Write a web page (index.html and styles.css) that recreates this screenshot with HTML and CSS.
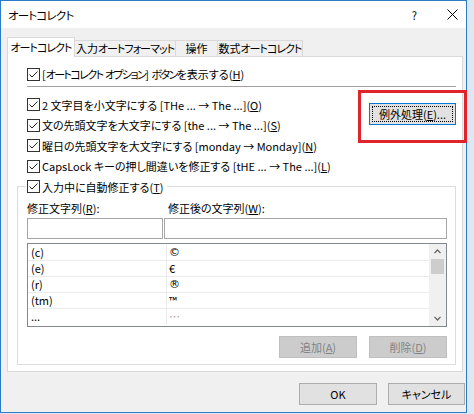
FILE: index.html
```html
<!DOCTYPE html>
<html lang="ja">
<head>
<meta charset="utf-8">
<title>オートコレクト</title>
<link rel="stylesheet" href="styles.css">
</head>
<body>
<div class="window">
  <div class="titlebar">
    <span class="title">オートコレクト</span>
    <span class="help">?</span>
    <svg class="close" width="11" height="11" viewBox="0 0 11 11"><path d="M0.5 0.5 L10.5 10.5 M10.5 0.5 L0.5 10.5" stroke="#000" stroke-width="1"/></svg>
  </div>
  <div class="tabs">
    <div class="tab active t1"><span class="k">オートコレクト</span></div>
    <div class="tab t2">入力<span class="k">オートフォーマット</span></div>
    <div class="tab t3">操作</div>
    <div class="tab t4">数式<span class="k">オートコレクト</span></div>
  </div>
  <div class="panel">
    <div class="row">
      <svg class="cb" width="13" height="13" viewBox="0 0 13 13"><rect x="0.5" y="0.5" width="12" height="12" fill="#fff" stroke="#333"/><path d="M2.5 6.5 L5 9 L10.5 3.5" fill="none" stroke="#222"/></svg>
      <span>[<span class="k2">オートコレクト</span> <span class="k2">オプション</span>] <span class="k2">ボタン</span>を表示する(<u>H</u>)</span>
    </div>
    <div class="sep"></div>
    <div class="opts">
      <div class="optlist">
        <div class="row">
          <svg class="cb" width="13" height="13" viewBox="0 0 13 13"><rect x="0.5" y="0.5" width="12" height="12" fill="#fff" stroke="#333"/><path d="M2.5 6.5 L5 9 L10.5 3.5" fill="none" stroke="#222"/></svg>
          <span>2 文字目を小文字にする [THe ... → The ...](<u>O</u>)</span>
        </div>
        <div class="row">
          <svg class="cb" width="13" height="13" viewBox="0 0 13 13"><rect x="0.5" y="0.5" width="12" height="12" fill="#fff" stroke="#333"/><path d="M2.5 6.5 L5 9 L10.5 3.5" fill="none" stroke="#222"/></svg>
          <span>文の先頭文字を大文字にする [the ... → The ...](<u>S</u>)</span>
        </div>
        <div class="row">
          <svg class="cb" width="13" height="13" viewBox="0 0 13 13"><rect x="0.5" y="0.5" width="12" height="12" fill="#fff" stroke="#333"/><path d="M2.5 6.5 L5 9 L10.5 3.5" fill="none" stroke="#222"/></svg>
          <span>曜日の先頭文字を大文字にする [monday → Monday](<u>N</u>)</span>
        </div>
        <div class="row">
          <svg class="cb" width="13" height="13" viewBox="0 0 13 13"><rect x="0.5" y="0.5" width="12" height="12" fill="#fff" stroke="#333"/><path d="M2.5 6.5 L5 9 L10.5 3.5" fill="none" stroke="#222"/></svg>
          <span>CapsLock キーの押し間違いを修正する [tHE ... → The ...](<u>L</u>)</span>
        </div>
      </div>
      <button class="btn default exc">例外処理(<u>E</u>)...</button>
    </div>
    <fieldset class="group">
      <legend class="legend">
        <svg class="cb" width="13" height="13" viewBox="0 0 13 13"><rect x="0.5" y="0.5" width="12" height="12" fill="#fff" stroke="#333"/><path d="M2.5 6.5 L5 9 L10.5 3.5" fill="none" stroke="#222"/></svg>
        <span>入力中に自動修正する(<u>T</u>)</span>
      </legend>
      <div class="labels">
        <span class="lab1">修正文字列(<u>R</u>):</span>
        <span>修正後の文字列(<u>W</u>):</span>
      </div>
      <div class="inputs">
        <div class="input in1"></div>
        <div class="input in2"></div>
      </div>
      <div class="list">
        <div class="rows">
          <div class="lr"><span class="c1">(c)</span><span class="c2 sym">©</span></div>
          <div class="lr"><span class="c1">(e)</span><span class="c2">€</span></div>
          <div class="lr"><span class="c1">(r)</span><span class="c2 sym">®</span></div>
          <div class="lr"><span class="c1">(tm)</span><span class="c2">™</span></div>
          <div class="lr last"><span class="c1">...</span><span class="c2 dim">…</span></div>
        </div>
        <div class="scroll">
          <div class="arrow"><svg width="7" height="5" viewBox="0 0 7 5"><path d="M0.5 4.2 L3.5 1 L6.5 4.2" fill="none" stroke="#606060" stroke-width="1.2"/></svg></div>
          <div class="thumb"></div>
          <div class="track"></div>
          <div class="arrow"><svg width="7" height="5" viewBox="0 0 7 5"><path d="M0.5 0.8 L3.5 4 L6.5 0.8" fill="none" stroke="#606060" stroke-width="1.2"/></svg></div>
        </div>
      </div>
      <div class="gbtns">
        <button class="btn disabled">追加(<u>A</u>)</button>
        <button class="btn disabled">削除(<u>D</u>)</button>
      </div>
    </fieldset>
  </div>
  <div class="footer">
    <button class="btn ok">OK</button>
    <button class="btn cancel">キャンセル</button>
  </div>
  <div class="annot"></div>
</div>
</body>
</html>
```
FILE: styles.css
```css
* { box-sizing: border-box; }
body {
  margin: 0;
  background: #dce9f4;
  font-family: "Noto Sans CJK JP", "Noto Sans", sans-serif;
  font-size: 11px;
  font-feature-settings: "palt";
  color: #000;
}
u { text-underline-offset: 1px; }
.k { letter-spacing: -1px; }
.k2 { letter-spacing: -1.6px; }
.window {
  position: relative;
  width: 467px;
  height: 413px;
  border: 1px solid #2b7bc8;
  background: #f0f0f0;
}
.titlebar {
  height: 27px;
  background: #fff;
  display: flex;
  align-items: center;
}
.title { padding-left: 7px; font-size: 11.5px; letter-spacing: -0.8px; }
.help { margin-left: auto; margin-right: 30px; font-size: 11px; }
.close { margin-right: 8px; display: block; }

.tabs {
  display: flex;
  align-items: flex-end;
  height: 20px;
  margin: 9px 0 -1px 6px;
  position: relative;
  z-index: 1;
}
.tab {
  height: 17px;
  border: 1px solid #d9d9d9;
  background: #f0f0f0;
  margin-left: -1px;
  text-align: center;
  line-height: 15px;
  white-space: nowrap;
}
.tab.active {
  height: 20px;
  background: #fff;
  border-bottom: none;
  margin-left: 0;
  position: relative;
  z-index: 2;
  line-height: 19px;
}
.t1 { width: 68px; }
.t2 { width: 102px; }
.t3 { width: 43px; }
.t4 { width: 86px; }

.panel {
  margin-left: 6px;
  width: 456px;
  height: 316px;
  border: 1px solid #d9d9d9;
  background: #fff;
  padding-top: 7px;
}
.row {
  display: flex;
  align-items: center;
  gap: 2px;
  height: 20px;
  padding-left: 19px;
  white-space: nowrap;
}
.cb { display: block; flex: none; }
.sep {
  margin: 2px 0 0 19px;
  width: 429px;
  height: 1px;
  background: #a0a0a0;
}
.opts { display: flex; margin-top: 7.5px; }
.optlist { flex: 1; }
.optlist .row { height: 20.5px; }

.btn {
  font-family: inherit;
  font-size: 11px;
  font-feature-settings: "palt";
  height: 22px;
  padding: 0;
  border: 1px solid #adadad;
  background: #e1e1e1;
  color: #000;
  line-height: 18px;
}
.btn.default { border-color: #0078d7; position: relative; }
.btn.default::after {
  content: "";
  position: absolute;
  inset: 2px;
  border: 1px dotted #000;
}
.exc { width: 87px; margin: 8.5px 6px 0 0; }
.btn.disabled { background: #cccccc; border-color: #bfbfbf; color: #838383; }

.group {
  margin: 0 0 0 9px;
  width: 439px;
  min-width: 0;
  border: 1px solid #dcdcdc;
  padding: 0 8px 6px 9px;
}
.legend {
  display: flex;
  align-items: center;
  gap: 2px;
  height: 20px;
  padding: 0 4px 0 1px;
  margin-left: -1px;
  white-space: nowrap;
}
.labels { display: flex; height: 16px; margin-top: 3px; line-height: 16px; }
.lab1 { width: 141px; }
.inputs { display: flex; gap: 1px; margin-top: 2px; }
.input { height: 21px; border: 1px solid #a6a6a6; background: #fff; }
.in1 { width: 136px; }
.in2 { width: 283px; }

.list {
  display: flex;
  margin-top: 4px;
  height: 84px;
  border: 1px solid #828790;
  background: #fff;
}
.rows { flex: 1; padding-top: 1px; }
.lr {
  display: flex;
  height: 16px;
  border-bottom: 1px solid #ebebeb;
  line-height: 15px;
}
.lr.last { border-bottom: none; }
.c1 { width: 139px; padding-left: 3px; border-right: 1px solid #ebebeb; }
.c2 { padding-left: 2px; }
.c2.sym { font-family: "DejaVu Sans", sans-serif; font-size: 11px; }
.c2.dim { color: #9a9a9a; }
.scroll {
  width: 17px;
  background: #f0f0f0;
  display: flex;
  flex-direction: column;
  align-items: center;
}
.arrow { height: 15px; display: flex; align-items: center; justify-content: center; }
.thumb { width: 13px; height: 15px; background: #cdcdcd; }
.track { flex: 1; }

.gbtns { display: flex; justify-content: flex-end; gap: 12px; margin-top: 9px; }
.gbtns .btn { width: 78px; }

.footer { display: flex; justify-content: flex-end; gap: 11px; margin: 11px 1px 0 0; }
.ok { width: 78px; }
.cancel { width: 77px; }

.annot {
  position: absolute;
  left: 357px;
  top: 89px;
  width: 109px;
  height: 53px;
  border: 3px solid #e0242c;
}
```
